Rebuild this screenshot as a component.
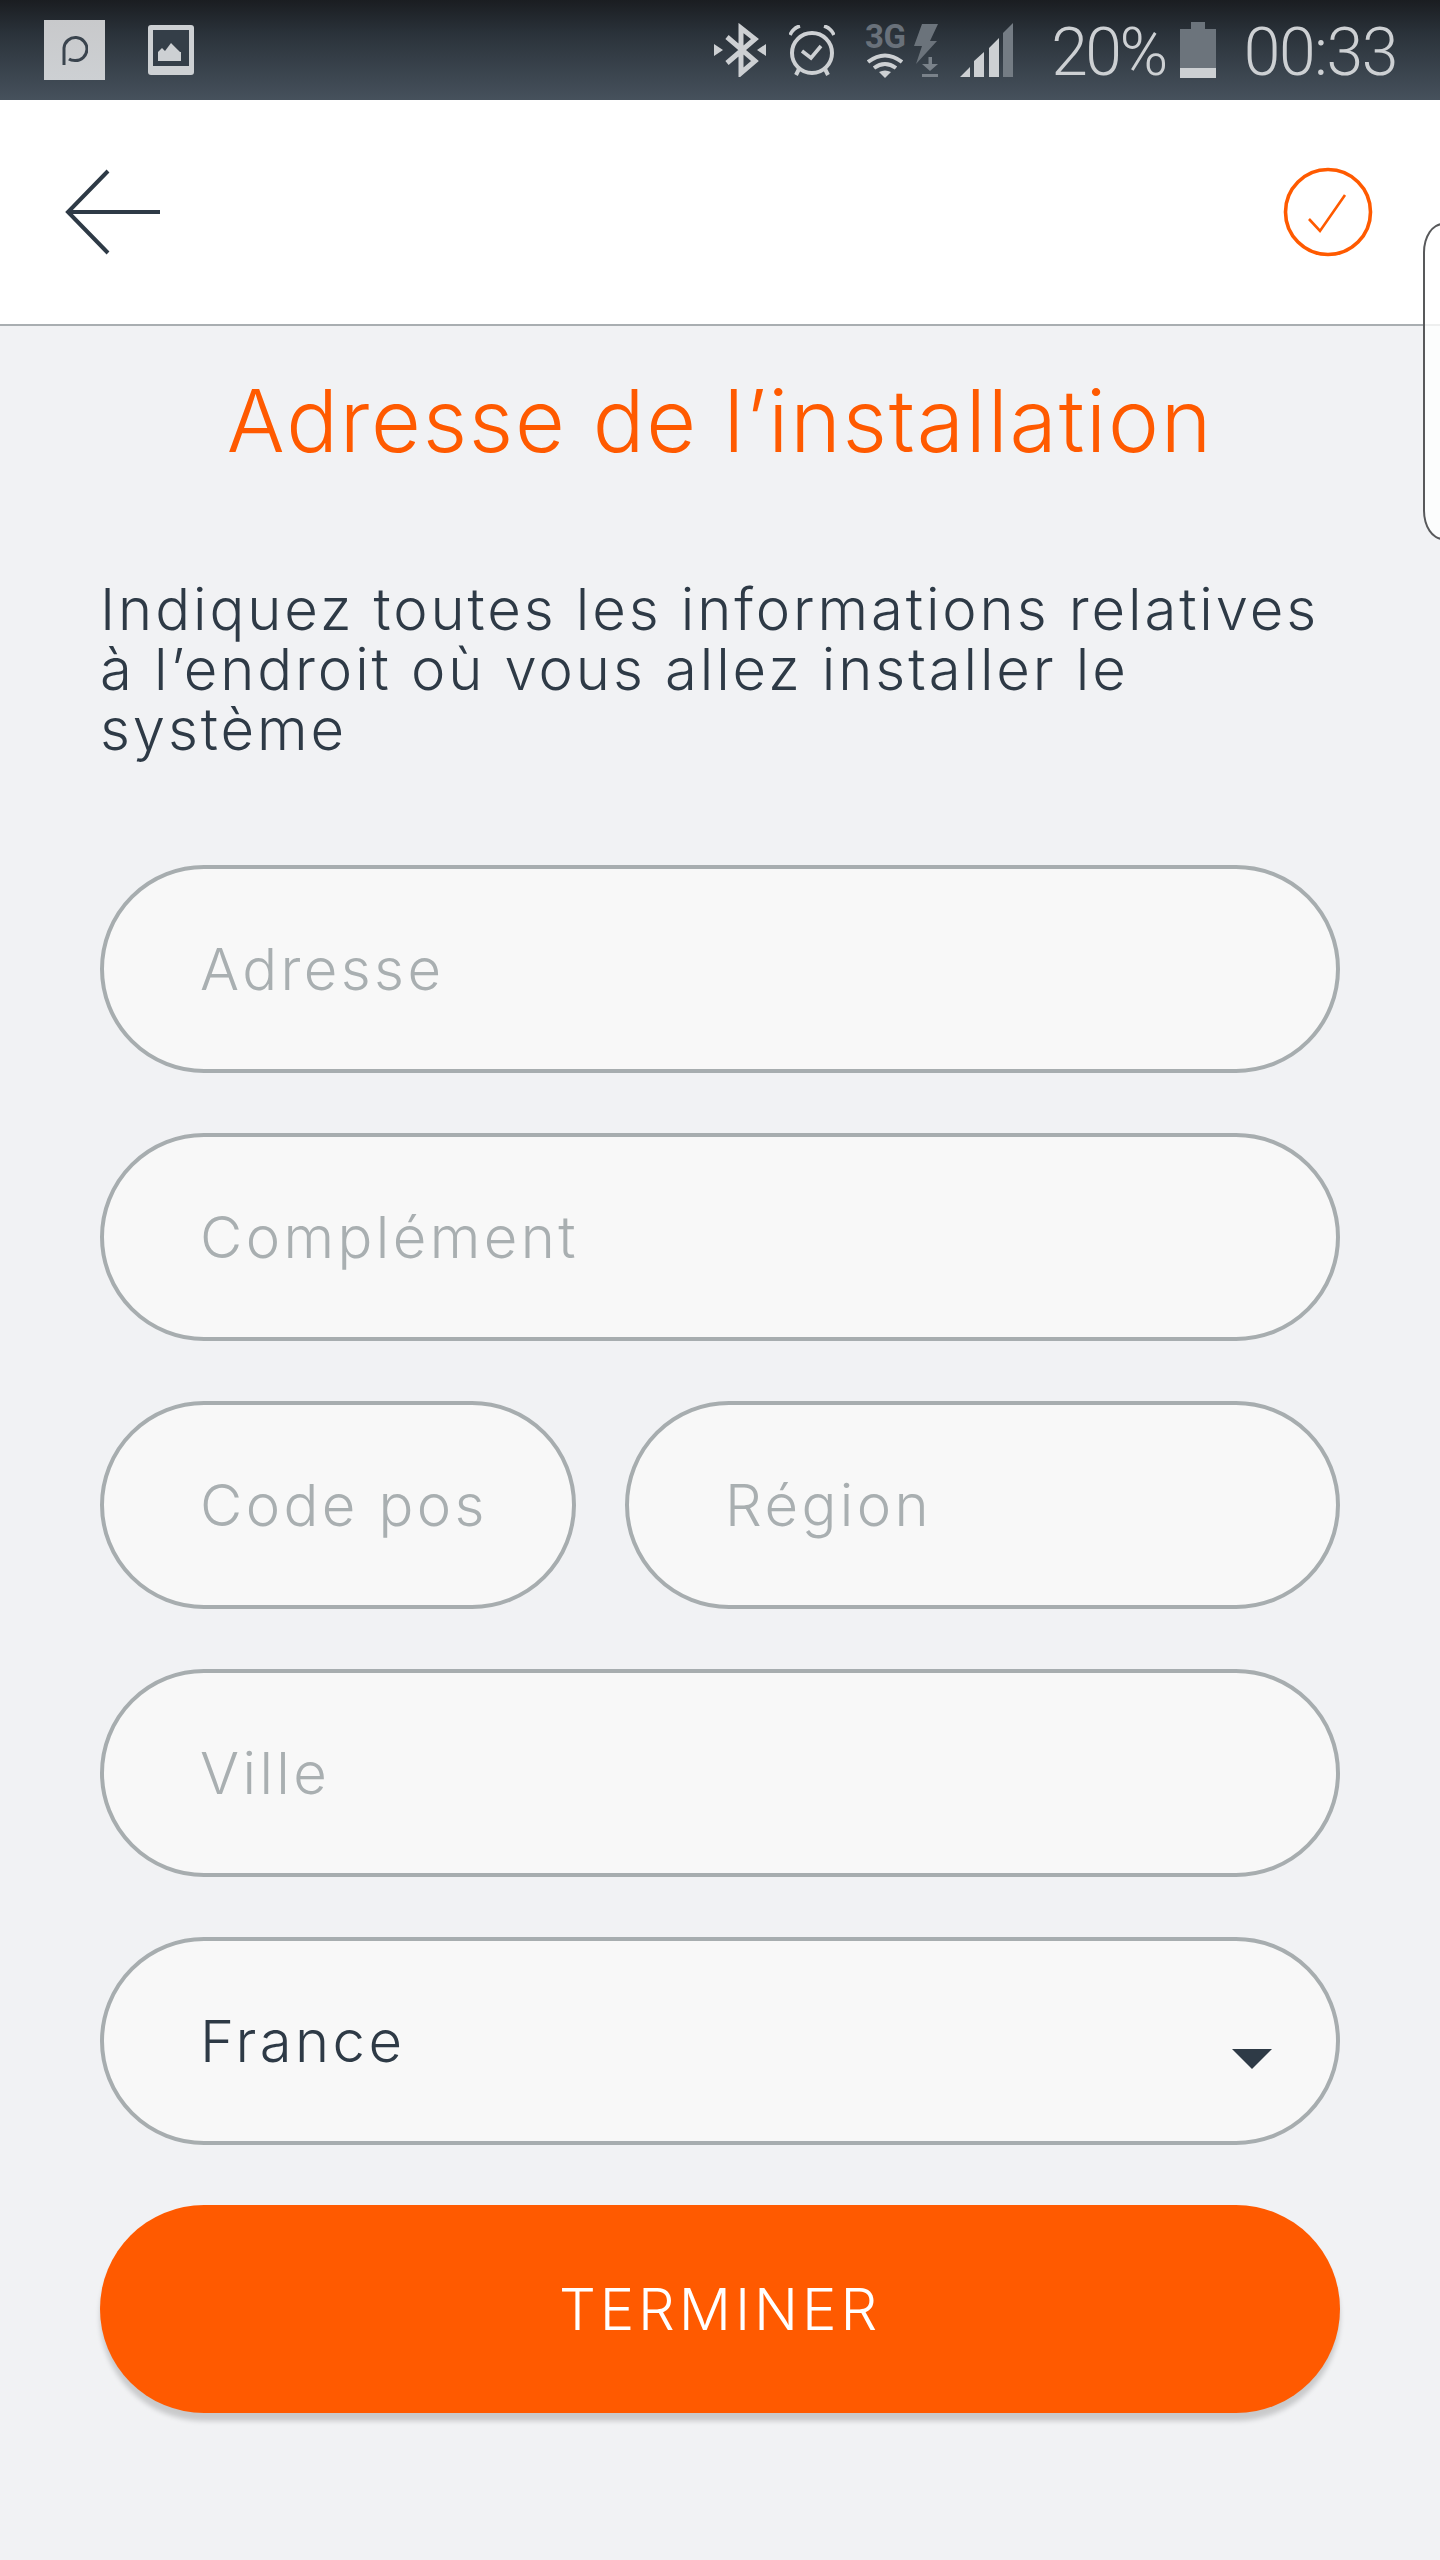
<div class="page">
  <header class="status">
    <div class="status-left">
      <div class="notif-p">
        <svg width="26" height="30" viewBox="0 0 26 30"><path d="M2 30 L2 13 A11.5 11.5 0 1 1 13 25.5 Q9 25.5 7 24" fill="none" stroke="#3a444e" stroke-width="3"/></svg>
      </div>
      <svg width="46" height="50" viewBox="0 0 46 50"><rect width="46" height="50" rx="3" fill="#cdd0d3"/><rect x="5" y="5" width="36" height="36" fill="#343e48"/><path d="M10 36V27l4-4 3 3 6-8 7 7 2 2 1 0v9z" fill="#cdd0d3"/></svg>
    </div>
    <div class="status-right">
      <svg class="bt" width="52" height="54" viewBox="0 0 52 54"><path d="M13 14 L41 38 L27 50 V5 L41 16 L13 40" fill="none" stroke="#cdd0d3" stroke-width="5"/><path d="M0 21v12l9-6zM52 21v12l-9-6z" fill="#cdd0d3"/></svg>
      <svg class="alarm" width="46" height="51" viewBox="0 0 46 51"><circle cx="23" cy="28" r="20" fill="none" stroke="#cdd0d3" stroke-width="4"/><path d="M13 26l9 7 10-12" fill="none" stroke="#cdd0d3" stroke-width="3.6"/><path d="M1 10Q4 3 11 1M35 1Q42 3 45 10" fill="none" stroke="#cdd0d3" stroke-width="3.6"/><path d="M10 44l-3 6M36 44l3 6" stroke="#cdd0d3" stroke-width="4"/></svg>
      <div class="net">
        <span class="g3">3G</span>
        <svg width="36" height="25" viewBox="0 0 36 25"><path d="M1 9Q18 -4 35 9M7 15Q18 7 29 15" fill="none" stroke="#cdd0d3" stroke-width="4"/><path d="M12 19Q18 16 24 19L18 25z" fill="#cdd0d3"/></svg>
      </div>
      <svg class="bolt" width="24" height="53" viewBox="0 0 24 53"><path d="M8 0H24L16 17H23L2 40L8 22H0z" fill="#6b737b"/><path d="M14.5 33H18V40H24L16 47L8 40H14.5z" fill="#7a828a"/><rect x="8" y="50" width="16" height="3" fill="#7a828a"/></svg>
      <svg class="signal" width="53" height="54" viewBox="0 0 53 54"><path d="M0 54L10 44V54zM14 54V38L24 29V54zM29 54V25L39 15V54z" fill="#cdd0d3"/><path d="M43 54V10L53 0V54z" fill="#747c84"/></svg>
      <span class="stat pct">20%</span>
      <svg class="batt" width="36" height="56" viewBox="0 0 36 56"><path d="M11 0H25V7H36V46H0V7H11z" fill="#6c747c"/><rect y="46" width="36" height="10" fill="#cdd0d3"/></svg>
      <span class="stat time">00:33</span>
    </div>
  </header>

  <nav class="topbar">
    <button class="icon-btn" aria-label="Retour">
      <svg width="100" height="88" viewBox="0 0 100 88"><path d="M44 3L4 44L44 85M4 44H96" fill="none" stroke="#2e3a46" stroke-width="4"/></svg>
    </button>
    <button class="icon-btn" aria-label="Valider">
      <svg width="90" height="90" viewBox="0 0 90 90"><circle cx="45" cy="45" r="42.5" fill="none" stroke="#ff5a00" stroke-width="3.6"/><path d="M26 52L37 64L62 28" fill="none" stroke="#ff5a00" stroke-width="2.6"/></svg>
    </button>
  </nav>

  <main class="content">
    <h1>Adresse de l’installation</h1>
    <p class="intro">Indiquez toutes les informations relatives à l’endroit où vous allez installer le système</p>
    <form class="form">
      <input class="field" placeholder="Adresse" />
      <input class="field" placeholder="Complément" />
      <div class="row">
        <input class="field zip" placeholder="Code postal" />
        <input class="field region" placeholder="Région" />
      </div>
      <input class="field" placeholder="Ville" />
      <div class="select-wrap">
        <select class="field">
          <option>France</option>
        </select>
        <span class="caret"></span>
      </div>
      <button type="button" class="submit">TERMINER</button>
    </form>
  </main>

  <div class="edge-handle"></div>
</div>

<style>
  :global(body) { margin: 0; background: #f1f2f4; }
  .page {
    position: relative;
    width: 1440px;
    height: 2560px;
    overflow: hidden;
    background: #f1f2f4;
    font-family: Inter, "Noto Sans", sans-serif;
    font-weight: 300;
  }
  .status {
    height: 100px;
    background: linear-gradient(#1a1d21 0%, #2b333b 35%, #46515c 100%);
    display: flex;
    justify-content: space-between;
    align-items: center;
  }
  .status-left { display: flex; align-items: center; gap: 43px; padding-left: 44px; }
  .notif-p {
    width: 61px;
    height: 60px;
    background: linear-gradient(#c8c9cb, #cdd0d3);
    display: flex;
    align-items: center;
    justify-content: center;
  }
  .status-right { display: flex; align-items: center; padding-right: 43px; }
  .status-right svg { display: block; }
  .alarm { margin-left: 23px; }
  .net { margin-left: 30px; display: flex; flex-direction: column; align-items: center; gap: 2px; width: 40px; }
  .g3 {
    font: 700 33px/28px Roboto, sans-serif;
    color: #69717a;
    letter-spacing: -0.5px;
  }
  .bolt { margin-left: 9px; }
  .signal { margin-left: 22px; }
  .stat {
    font-family: Roboto, sans-serif;
    font-weight: 300;
    font-size: 66px;
    line-height: 100px;
    color: #cdd0d3;
    position: relative;
    top: 3px;
  }
  .pct { margin-left: 38px; letter-spacing: -2.5px; }
  .batt { margin-left: 14px; }
  .time { margin-left: 28px; letter-spacing: -1.4px; }
  .topbar {
    height: 224px;
    background: #fff;
    border-bottom: 2px solid #a9aeb1;
    display: flex;
    justify-content: space-between;
    align-items: center;
    padding: 0 67px 0 64px;
  }
  .icon-btn { background: none; border: 0; padding: 0; display: flex; }
  .content { padding: 0 100px; }
  h1 {
    margin: 45px 0 0;
    text-align: center;
    font-size: 86px;
    line-height: 100px;
    font-weight: 300;
    letter-spacing: 1.8px;
    color: #ff5a00;
  }
  .intro {
    margin: 108px 0 0;
    font-size: 58px;
    line-height: 60px;
    letter-spacing: 2.9px;
    color: #2e3a46;
  }
  .form { margin-top: 106px; display: flex; flex-direction: column; gap: 60px; }
  .field {
    box-sizing: border-box;
    display: block;
    width: 100%;
    height: 208px;
    border: 4px solid #a7adaf;
    border-radius: 104px;
    background: #f8f8f8;
    padding: 0 90px 0 96px;
    font-family: inherit;
    font-weight: 300;
    font-size: 58px;
    letter-spacing: 3.4px;
    color: #2e3a46;
    outline: none;
    appearance: none;
  }
  .field::placeholder { color: #a9afb1; opacity: 1; }
  .row { display: flex; gap: 49px; }
  .zip { width: 476px; flex: none; }
  .region { flex: 1; min-width: 0; }
  .select-wrap { position: relative; }
  .caret {
    position: absolute;
    left: 1132px;
    top: 112px;
    width: 0;
    height: 0;
    border-left: 20px solid transparent;
    border-right: 20px solid transparent;
    border-top: 20px solid #2e3a46;
  }
  .submit {
    height: 208px;
    border: 0;
    border-radius: 104px;
    background: #ff5a00;
    color: #fff;
    font-family: inherit;
    font-weight: 300;
    font-size: 58px;
    letter-spacing: 3.9px;
    box-shadow: 0 8px 5px rgba(0, 0, 0, 0.17);
  }
  .edge-handle {
    position: absolute;
    left: 1423px;
    top: 223px;
    width: 40px;
    height: 317px;
    box-sizing: border-box;
    border: 2.5px solid #58595b;
    border-radius: 30px / 44px;
    background: rgba(255, 255, 255, 0.8);
  }
</style>
